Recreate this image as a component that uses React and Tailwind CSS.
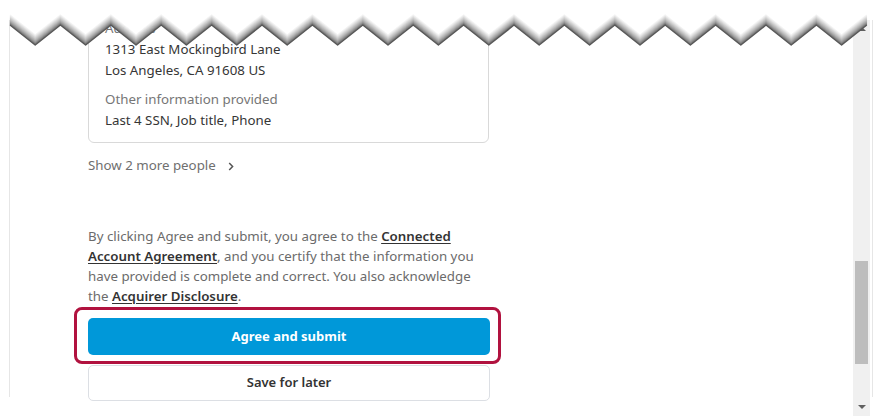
const PERIOD = 50.4;

function zigzag(offset) {
  const pts = [];
  for (let k = 0; k <= 17; k++) {
    const x = 10 + k * PERIOD;
    pts.push(`${x},${25 - offset}`);
    if (k < 17) pts.push(`${x + PERIOD / 2},${45 - offset}`);
  }
  return pts;
}

function TornEdge() {
  const band = 11;
  const top = zigzag(band);
  const whiteShape = ["0,0", "883,0", "883,14", "870,14", ...top.slice().reverse(), "0,14"].join(" ");
  const lines = [];
  for (let i = band; i >= 0; i--) {
    const t = i / band;
    const v = Math.round(88 + (255 - 88) * Math.pow(t, 0.65));
    lines.push(
      <polyline key={i} points={zigzag(i).join(" ")} fill="none" stroke={`rgb(${v},${v},${v})`} strokeWidth="1.5" strokeLinejoin="round" />
    );
  }
  return (
    <svg className="absolute left-0 top-0 pointer-events-none" width="883" height="50" viewBox="0 0 883 50">
      <polygon points={whiteShape} fill="#fff" />
      {lines}
    </svg>
  );
}

export default function App() {
  return (
    <div className="relative w-[883px] h-[416px] overflow-hidden bg-white flex font-['Noto_Sans',sans-serif] text-[13.3px]">
      {/* page edge */}
      <div className="ml-[9px] mt-[20px] mb-[19px] w-px shrink-0 bg-[#e6e6e6]" />

      {/* Content */}
      <div className="ml-[78px] w-[402px] shrink-0 flex flex-col pt-[5px]">
        <div className="w-[401px] border border-[#d9d9d9] rounded-[6px] px-[16px] pt-[12px] pb-[11px] leading-[21px]">
          <p className="text-[#767676]">Address</p>
          <p className="text-[#363636]">1313 East Mockingbird Lane</p>
          <p className="text-[#363636]">Los Angeles, CA 91608 US</p>
          <p className="mt-[8px] text-[#767676]">Other information provided</p>
          <p className="text-[#363636]">Last 4 SSN, Job title, Phone</p>
        </div>

        <button className="mt-[13px] self-start flex items-center gap-[12px] h-[20px] text-[#6f6f6f]">
          Show 2 more people
          <svg width="6" height="9" viewBox="0 0 6 9" fill="none">
            <path d="M1.2 1 L4.6 4.5 L1.2 8" stroke="#555" strokeWidth="1.5" />
          </svg>
        </button>

        <p className="mt-[50px] leading-[20px] text-[#6b6b6b] whitespace-nowrap">
          By clicking Agree and submit, you agree to the{" "}
          <a className="font-semibold text-[#333] underline underline-offset-2">Connected</a>
          <br />
          <a className="font-semibold text-[#333] underline underline-offset-2">Account Agreement</a>, and you certify that the information you
          <br />
          have provided is complete and correct. You also acknowledge
          <br />
          the <a className="font-semibold text-[#333] underline underline-offset-2">Acquirer Disclosure</a>.
        </p>

        <div className="relative mt-[12px]">
          <div className="absolute -left-[14px] -right-[11px] -top-[11px] -bottom-[9px] border-[3px] border-[#b1123f] rounded-[8px]" />
          <button className="relative w-full h-[37px] rounded-[5px] bg-[#0098d9] text-white font-bold text-[13px]">
            Agree and submit
          </button>
        </div>

        <button className="mt-[10px] w-full h-[36px] rounded-[5px] border border-[#dcdfe4] bg-white text-[#333] font-semibold text-[13px]">
          Save for later
        </button>
      </div>

      <div className="flex-1" />

      {/* Scrollbar */}
      <div className="mt-[20px] w-[17px] shrink-0 bg-[#f0f0f0] flex flex-col items-center">
        <div className="h-[17px] flex items-center justify-center">
          <svg width="8" height="5" viewBox="0 0 8 5"><path d="M0 5 L4 1 L8 5 Z" fill="#606060" /></svg>
        </div>
        <div className="mt-[224px] w-[13px] h-[103px] bg-[#bdbdbd]" />
        <div className="mt-auto h-[17px] flex items-center justify-center">
          <svg width="8" height="5" viewBox="0 0 8 5"><path d="M0 0 L8 0 L4 4 Z" fill="#606060" /></svg>
        </div>
      </div>
      <div className="ml-[2px] mr-[10px] mt-[20px] mb-[19px] w-px shrink-0 bg-[#e6e6e6]" />

      <TornEdge />
    </div>
  );
}
